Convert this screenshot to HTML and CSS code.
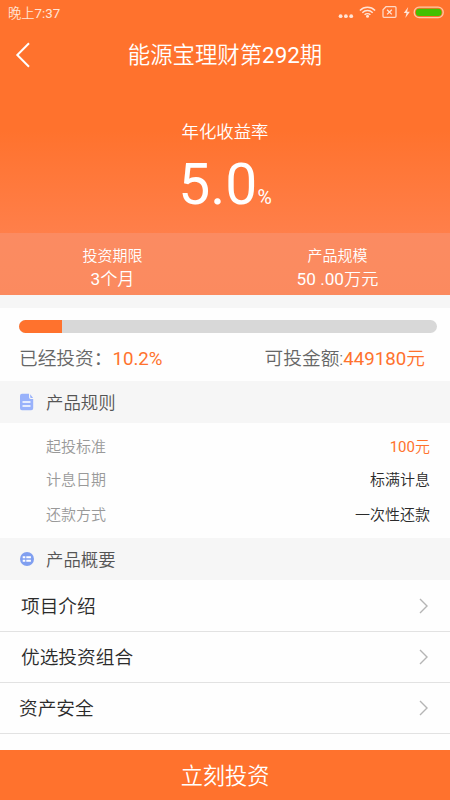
FILE: index.html
```html
<!DOCTYPE html>
<html lang="zh-CN">
<head>
<meta charset="utf-8">
<title>能源宝理财第292期</title>
<link rel="stylesheet" href="styles.css">
</head>
<body>
<main class="screen">
  <section class="hero">
    <div class="status">
      <span class="time">晚上<i>7:37</i></span>
      <svg class="status-icons" width="108" height="26" viewBox="0 0 108 26" fill="none">
        <g fill="#ffe4d6"><circle cx="3.600" cy="16.200" r="1.900"/><circle cx="8.900" cy="16.200" r="1.900"/><circle cx="14.200" cy="16.200" r="1.900"/><circle cx="30.500" cy="16.300" r="1.500"/></g>
        <g stroke="#ffe4d6" stroke-width="1.500"><path d="M22.900 10.500a10.800 10.800 0 0 1 15.200 0M25.300 12.700a7.400 7.400 0 0 1 10.400 0M27.600 14.800a4.200 4.200 0 0 1 5.800 0"/></g>
        <path d="M49 6.700h9q1 0 1 1v8.600q0 1-1 1H47q-1 0-1-1V9.800z" stroke="#ffd9c6" stroke-width="1.300"/>
        <path d="M50.100 9.700l4.700 4.700M54.800 9.700l-4.700 4.700" stroke="#ffe4d6" stroke-width="1.300"/>
        <path d="M71.200 7l-4.400 6.100h2.700l-1.200 5 4.600-6.300h-2.800z" fill="#ffe4d6"/>
        <rect x="77.200" y="7.200" width="29" height="10.400" rx="5" stroke="#ffc9a5" stroke-width="1.300"/>
        <rect x="78.800" y="8.800" width="25.800" height="7.200" rx="3.500" fill="#43c000"/>
      </svg>
    </div>
    <header class="titlebar">
      <svg class="back" width="16" height="26" viewBox="0 0 16 26" fill="none" stroke="#fff" stroke-width="2"><path d="M14 1.200L2.300 13 14 24.800"/></svg>
      <h1>能源宝理财第<i>292</i>期</h1>
    </header>
    <div class="rate-label">年化收益率</div>
    <div class="rate"><span class="rate-value">5.0</span><span class="rate-unit">%</span></div>
    <div class="facts">
      <div class="fact"><span class="fact-name">投资期限</span><span class="fact-value"><i>3</i>个月</span></div>
      <div class="fact"><span class="fact-name">产品规模</span><span class="fact-value"><i>50 .00</i>万元</span></div>
    </div>
  </section>
  <section class="progress">
    <div class="track"><div class="fill" style="width:10.2%"></div></div>
    <div class="amounts">
      <span>已经投资：<b><i>10.2%</i></b></span>
      <span>可投金额:<b><i>449180</i>元</b></span>
    </div>
  </section>
  <h2 class="section">
    <svg width="16" height="18" viewBox="0 0 16 18"><path d="M3 .8h7v3.400q0 1.800 1.800 1.800h2.400v9.200q0 2-2 2H3q-2 0-2-2V2.800q0-2 2-2z" fill="#99b2fb"/><path d="M11.200 1.200l2.900 3.700h-2q-.9 0-.9-.9z" fill="#99b2fb"/><path d="M3.500 9h8M3.500 13h8" stroke="#fff" stroke-width="1.500"/></svg>
    <span>产品规则</span>
  </h2>
  <dl class="rules">
    <div><dt>起投标准</dt><dd class="accent"><i>100</i>元</dd></div>
    <div><dt>计息日期</dt><dd>标满计息</dd></div>
    <div><dt>还款方式</dt><dd>一次性还款</dd></div>
  </dl>
  <h2 class="section summary">
    <svg width="16" height="18" viewBox="0 0 16 18"><circle cx="8" cy="9" r="7" fill="#809ff0"/><path d="M3.700 7.200h2.600M7.300 7.200h4.600M3.700 10.800h2.600M7.300 10.800h4.600" stroke="#fff" stroke-width="1.900"/></svg>
    <span>产品概要</span>
  </h2>
  <nav class="links">
    <a><span>项目介绍</span><svg width="10" height="16" viewBox="0 0 10 16"><path d="M1 1l7 7-7 7"/></svg></a>
    <a><span>优选投资组合</span><svg width="10" height="16" viewBox="0 0 10 16"><path d="M1 1l7 7-7 7"/></svg></a>
    <a class="wide"><span>资产安全</span><svg width="10" height="16" viewBox="0 0 10 16"><path d="M1 1l7 7-7 7"/></svg></a>
  </nav>
  <button class="invest">立刻投资</button>
</main>
</body>
</html>
```
FILE: styles.css
```css
* { box-sizing: border-box; margin: 0; padding: 0; }
body {
  font-family: Roboto, "Noto Sans CJK SC", sans-serif;
  font-weight: 350;
  color: #2b2b2b;
  background: #fefefe;
}
h1, h2, b { font-weight: inherit; }
i { font-style: normal; font-weight: 400; }
svg { display: block; flex: none; }
.screen { width: 450px; height: 800px; display: flex; flex-direction: column; overflow: hidden; }
.hero {
  height: 295px;
  flex: none;
  color: #fff;
  background: linear-gradient(#ff722d 0, #ff722d 130px, #ff7f4a 233px, #ff7d46 295px);
}
.status { height: 26px; padding: 0 5px 0 8px; display: flex; justify-content: space-between; }
.time { font-size: 13.3px; line-height: 27px; color: #ffe4d6; }
.titlebar { height: 57px; display: grid; grid-template-columns: 64px 1fr 64px; align-items: center; }
.back { margin-left: 15px; }
.titlebar h1 { font-size: 22.4px; line-height: 58px; text-align: center; white-space: nowrap; }
.rate-label { margin-top: 36px; font-size: 17.4px; line-height: 27px; height: 26px; text-align: center; }
.rate { height: 78px; padding-top: 1px; display: flex; justify-content: center; align-items: baseline; line-height: 78px; }
.rate-value { font-size: 57px; font-weight: 400; }
.rate-unit { font-size: 19.5px; font-weight: 400; }
.facts { margin-top: 10px; height: 62px; padding-top: 12px; display: flex; background: rgba(245, 158, 130, .42); }
.fact { flex: 1; display: flex; flex-direction: column; align-items: center; }
.fact-name { font-size: 15px; line-height: 23px; }
.fact-value { font-size: 17.2px; line-height: 22px; }
.progress { height: 86px; flex: none; padding: 12px 13px 0 19px; border-top: 13px solid #f6f6f6; }
.track { height: 13px; border-radius: 7px; background: #d8d8d8; overflow: hidden; }
.fill { height: 100%; background: #ff722d; }
.amounts { margin-top: 12px; padding-right: 12px; display: flex; justify-content: space-between; font-size: 18.7px; line-height: 29px; color: #666; }
.amounts b, .accent { color: #ff722d; }
.section { height: 42px; flex: none; padding-left: 19px; display: flex; align-items: center; gap: 11px; background: #f6f6f6; font-size: 17.4px; color: #555; }
.section span { margin-bottom: 2px; }
.rules { height: 115px; flex: none; padding: 7px 20px 0 46px; font-size: 15px; }
.rules div { height: 34px; line-height: 34px; display: flex; justify-content: space-between; }
.rules div:nth-child(2) { line-height: 32px; }
.rules dt { color: #999; }
.links { flex: 1; padding-top: 1px; }
.links a { height: 51px; padding: 0 21px; display: flex; align-items: center; justify-content: space-between; border-bottom: 1px solid #e2e2e2; font-size: 18.7px; }
.links a.wide { padding-left: 19px; }
.links span { margin-bottom: 4px; }
.links path { fill: none; stroke: #b5b5b5; stroke-width: 1.4; }
.invest { height: 50px; flex: none; padding-bottom: 2px; border: 0; background: #ff722d; color: #fff; font: inherit; font-size: 22.2px; }
```
